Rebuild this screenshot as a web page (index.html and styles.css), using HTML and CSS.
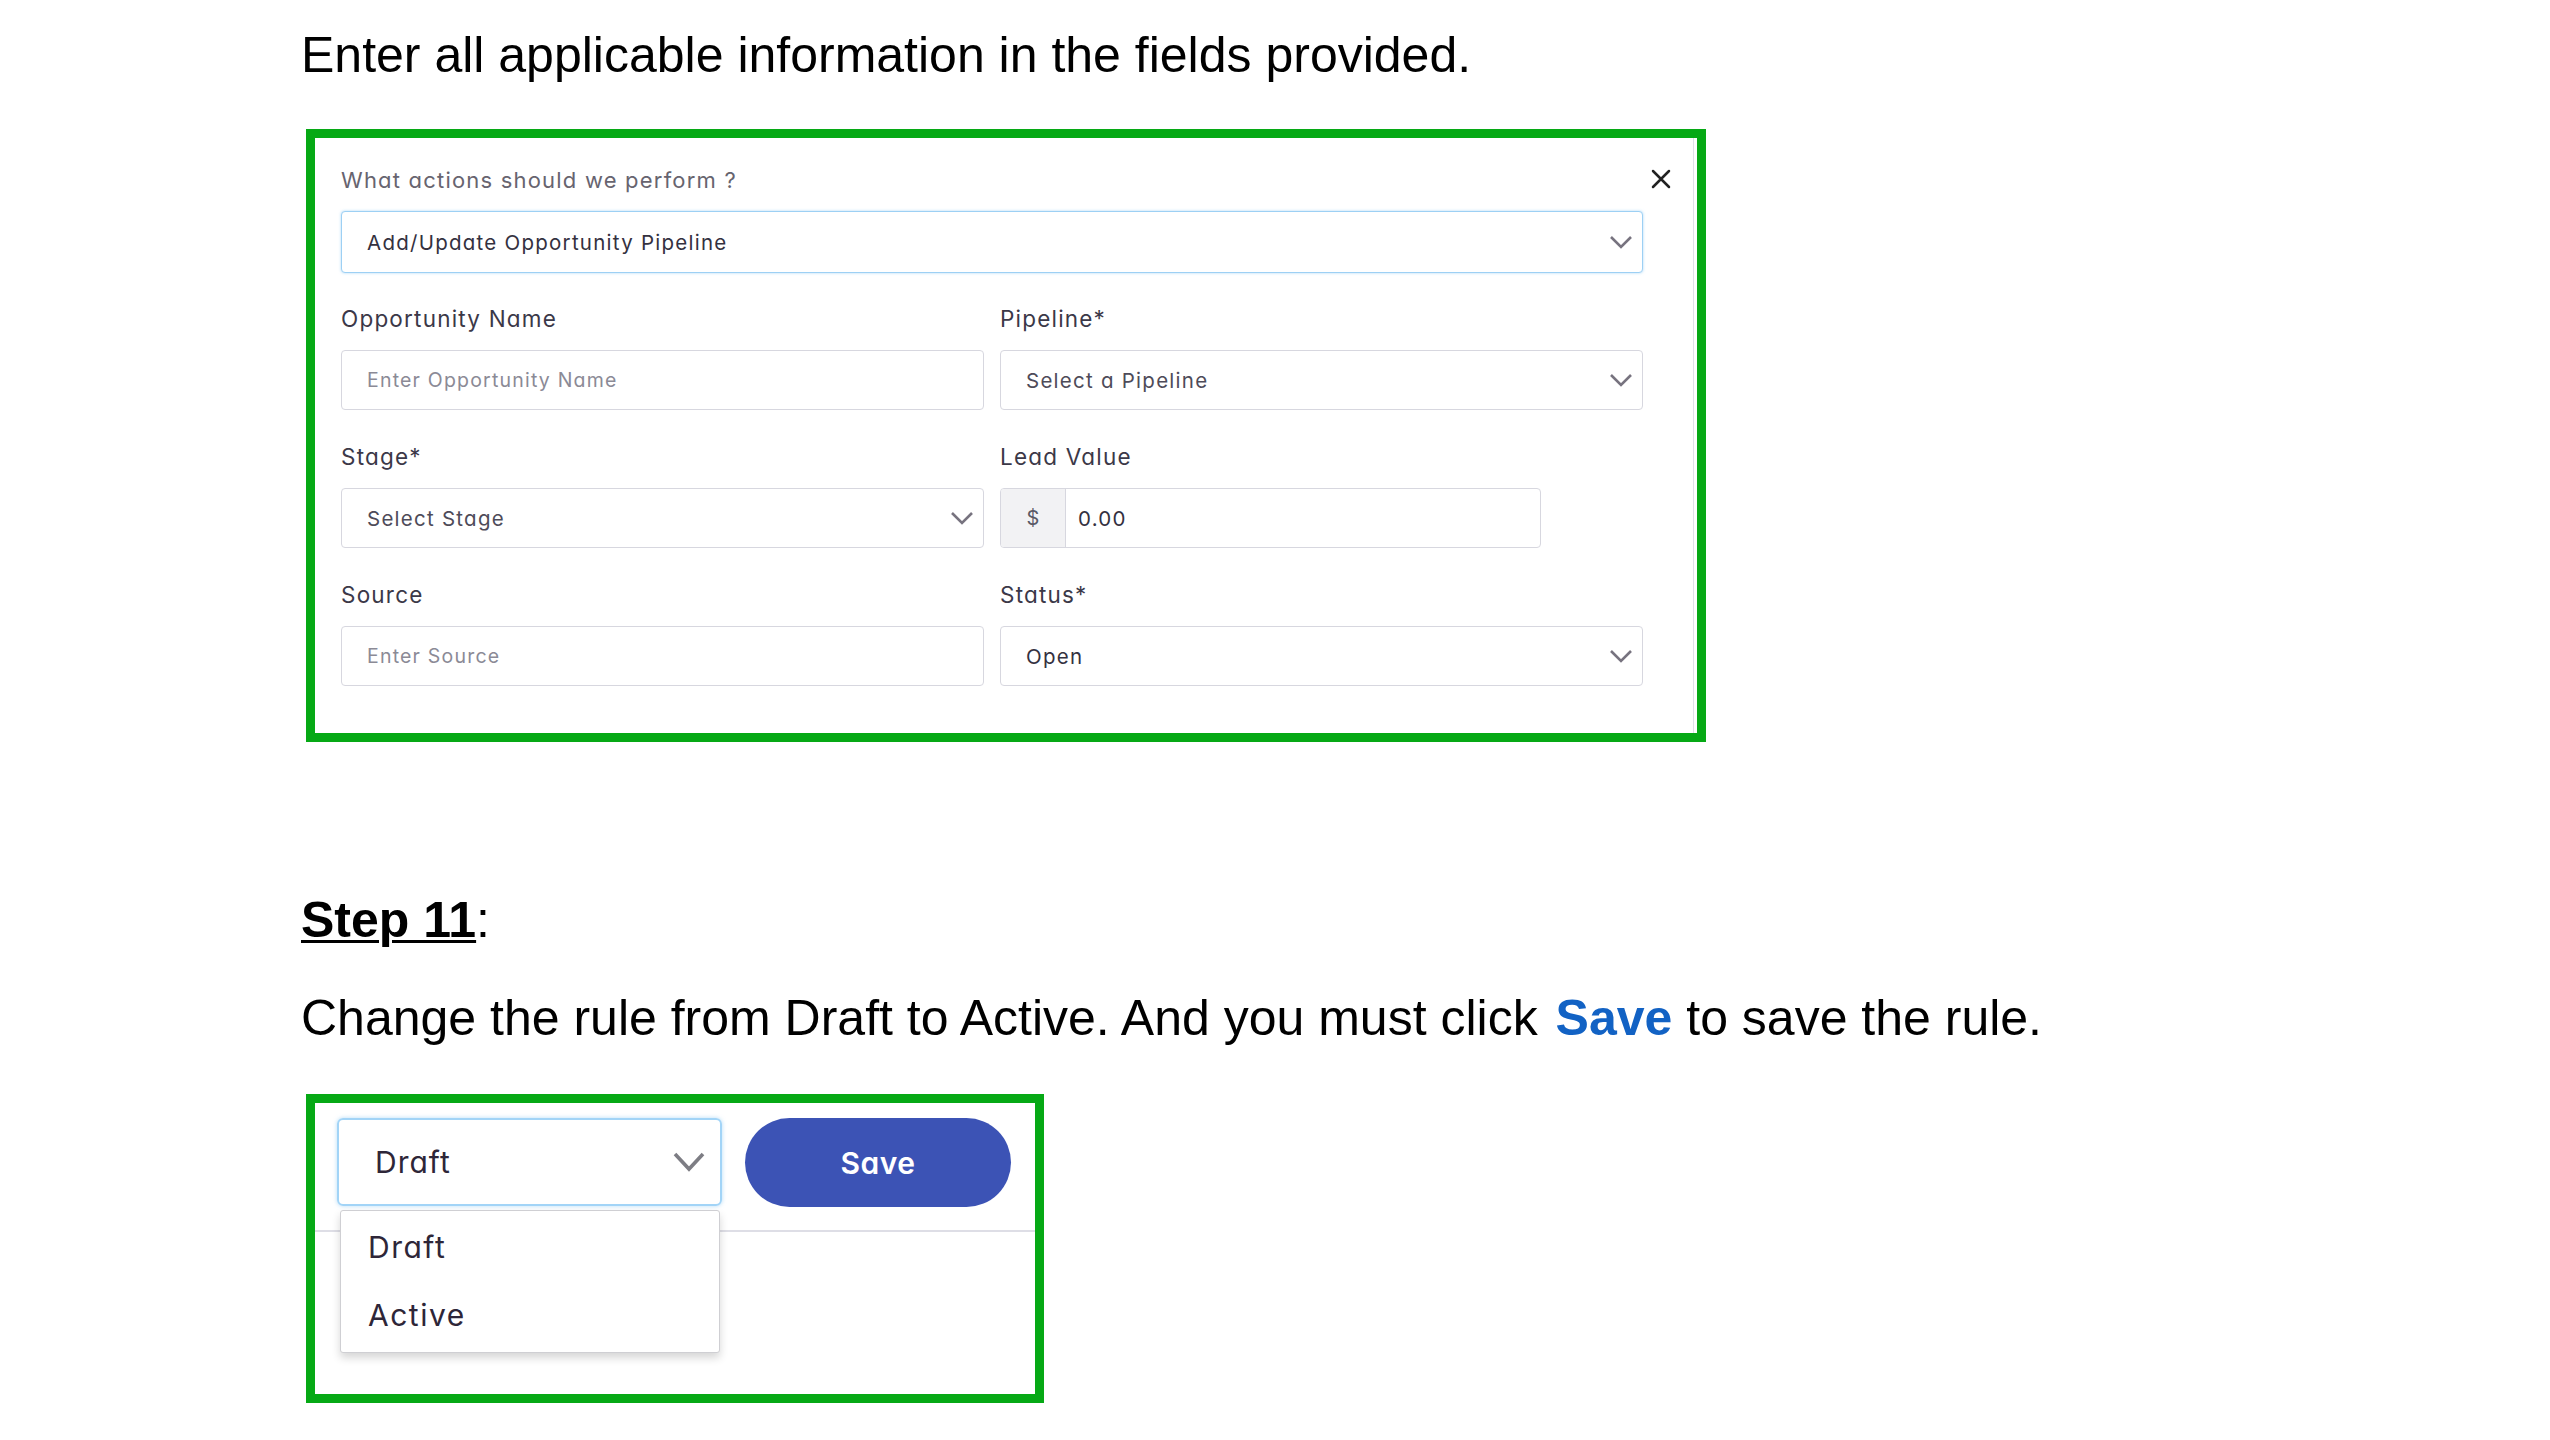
FILE: index.html
```html
<!DOCTYPE html>
<html lang="en">
<head>
<meta charset="utf-8">
<title>Step instructions</title>
<link rel="stylesheet" href="styles.css">
</head>
<body>
<main class="doc">
  <p class="lead heading">Enter all applicable information in the fields provided.</p>

  <section class="frame frame-form">
    <div class="modal">
      <div class="modal-head">
        <span class="q-label">What actions should we perform ?</span>
        <svg class="close" viewBox="0 0 20 20" width="20" height="20"><path d="M2 2 L18 18 M18 2 L2 18" stroke="#222" stroke-width="2.5" stroke-linecap="round" fill="none"/></svg>
      </div>
      <div class="select select-focus action-select">
        <span class="value">Add/Update Opportunity Pipeline</span>
        <svg class="chev" viewBox="0 0 24 14" width="24" height="14"><path d="M2 2 L12 12 L22 2" stroke="#77737f" stroke-width="2.6" fill="none"/></svg>
      </div>

      <div class="grid">
        <div class="field">
          <label>Opportunity Name</label>
          <div class="input"><span class="placeholder">Enter Opportunity Name</span></div>
        </div>
        <div class="field">
          <label>Pipeline*</label>
          <div class="select"><span class="value muted">Select a Pipeline</span>
            <svg class="chev" viewBox="0 0 24 14" width="24" height="14"><path d="M2 2 L12 12 L22 2" stroke="#77737f" stroke-width="2.6" fill="none"/></svg></div>
        </div>
        <div class="field">
          <label>Stage*</label>
          <div class="select"><span class="value muted">Select Stage</span>
            <svg class="chev" viewBox="0 0 24 14" width="24" height="14"><path d="M2 2 L12 12 L22 2" stroke="#77737f" stroke-width="2.6" fill="none"/></svg></div>
        </div>
        <div class="field">
          <label>Lead Value</label>
          <div class="input money"><span class="addon">$</span><span class="value money-val">0.00</span></div>
        </div>
        <div class="field">
          <label>Source</label>
          <div class="input"><span class="placeholder">Enter Source</span></div>
        </div>
        <div class="field">
          <label>Status*</label>
          <div class="select"><span class="value">Open</span>
            <svg class="chev" viewBox="0 0 24 14" width="24" height="14"><path d="M2 2 L12 12 L22 2" stroke="#77737f" stroke-width="2.6" fill="none"/></svg></div>
        </div>
      </div>
    </div>
  </section>

  <p class="lead step"><span class="step-title">Step 11</span>:</p>
  <p class="lead change">Change the rule from Draft to Active. And you must click <b class="save-word">Save</b> to save the rule.</p>

  <section class="frame frame-status">
    <div class="status-row">
      <div class="status-wrap">
        <div class="status-select">
          <span>Draft</span>
          <svg class="chev-lg" viewBox="0 0 34 22" width="34" height="22"><path d="M3 3 L17 18 L31 3" stroke="#7d7d84" stroke-width="3.6" fill="none"/></svg>
        </div>
        <ul class="menu">
          <li>Draft</li>
          <li>Active</li>
        </ul>
      </div>
      <button class="save-btn" type="button">Save</button>
    </div>
    <div class="divider"></div>
  </section>
</main>
</body>
</html>
```

FILE: styles.css
```css
html, body {
  margin: 0;
  background: #ffffff;
}

.doc {
  padding: 26px 0 0 301px;
  font-family: "Liberation Sans", Arial, sans-serif;
  color: #000;
}

.lead {
  font-size: 50px;
  line-height: 58px;
  margin: 0;
}

.frame {
  margin-left: 5px;
  border: 9px solid #06a915;
  box-sizing: border-box;
  background: #fff;
}

.frame-form {
  width: 1400px;
  margin-top: 45px;
}

.modal {
  margin-right: 3px;
  border-right: 1px solid #e0e0e8;
  padding: 27px 22px 47px 26px;
  font-family: Inter, "Noto Sans", sans-serif;
  font-feature-settings: "cv11" 1;
}

.modal-head {
  display: flex;
  justify-content: space-between;
  align-items: flex-start;
  height: 30px;
}

.q-label {
  font-size: 22px;
  line-height: 30px;
  letter-spacing: 1.2px;
  color: #67646f;
}

.close {
  margin-top: 4px;
}

.select,
.input {
  box-sizing: border-box;
  border: 1.5px solid #d7d7df;
  border-radius: 4px;
  display: flex;
  align-items: center;
  justify-content: space-between;
  padding: 0 9px 0 25px;
  background: #fff;
}

.select-focus {
  border-color: #9dd0f4;
  box-shadow: 0 0 3px rgba(120, 190, 240, 0.6);
}

.action-select {
  margin: 16px 28px 0 0;
  height: 62px;
}

.grid {
  display: grid;
  grid-template-columns: 1fr 1fr;
  column-gap: 16px;
  row-gap: 32px;
  margin: 31px 28px 0 0;
}

.field label {
  display: block;
  font-size: 22.5px;
  line-height: 30px;
  letter-spacing: 1.2px;
  color: #3b3848;
  margin-bottom: 16px;
}

.field .select,
.field .input {
  height: 60px;
}

.placeholder {
  color: #8b8a96;
  font-size: 19.5px;
  letter-spacing: 1.2px;
}

.value {
  color: #34313f;
  font-size: 20.5px;
  letter-spacing: 1.25px;
}

.value.muted {
  color: #4e4b59;
}

.money {
  width: 541px;
  padding: 0;
  justify-content: flex-start;
  overflow: hidden;
}

.addon {
  width: 64px;
  align-self: stretch;
  background: #f2f2f4;
  border-right: 1.5px solid #d7d7df;
  display: flex;
  align-items: center;
  justify-content: center;
  color: #5a5a66;
  font-size: 20px;
}

.money-val {
  padding-left: 12px;
}

/* Step 11 */
.step {
  margin-top: 149px;
}

.step-title {
  font-weight: bold;
  text-decoration: underline;
  text-decoration-thickness: 3px;
  text-underline-offset: 3px;
}

.change {
  margin-top: 40px;
}

.save-word {
  color: #1262c4;
  margin-left: 4px;
}

.frame-status {
  width: 738px;
  height: 309px;
  margin-top: 47px;
  font-family: Inter, "Noto Sans", sans-serif;
  font-feature-settings: "cv11" 1;
}

.status-row {
  display: flex;
  align-items: flex-start;
  gap: 23px;
  padding: 15px 0 0 22px;
}

.status-wrap {
  position: relative;
}

.status-select {
  box-sizing: border-box;
  width: 385px;
  height: 88px;
  border: 2px solid #a2d4f7;
  border-radius: 6px;
  box-shadow: 0 0 4px rgba(120, 190, 240, 0.55);
  display: flex;
  align-items: center;
  justify-content: space-between;
  padding: 0 14px 0 36px;
  font-size: 30px;
  letter-spacing: 1px;
  color: #2e2638;
}

.menu {
  position: absolute;
  top: 92px;
  left: 3px;
  width: 380px;
  box-sizing: border-box;
  height: 143px;
  margin: 0;
  padding: 2px 0 0 27px;
  list-style: none;
  background: #fff;
  border: 1px solid #cfcfd3;
  border-radius: 3px;
  box-shadow: 0 5px 9px rgba(0, 0, 0, 0.16);
  font-size: 30px;
  letter-spacing: 1.5px;
  line-height: 68px;
  color: #2e2638;
  z-index: 2;
}

.save-btn {
  width: 266px;
  height: 89px;
  border: 0;
  border-radius: 45px;
  background: #3c53b5;
  color: #fff;
  font-family: Inter, "Noto Sans", sans-serif;
  font-feature-settings: "cv11" 1;
  font-size: 30px;
  font-weight: 600;
  letter-spacing: 0.5px;
  padding: 0;
}

.divider {
  height: 2px;
  background: #dedee6;
  margin-top: 23px;
}
```
